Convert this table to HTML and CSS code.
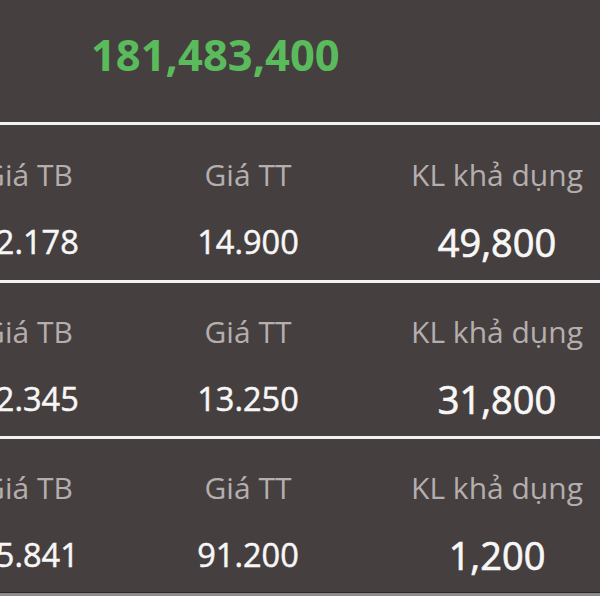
FILE: index.html
```html
<!DOCTYPE html>
<html lang="vi">
<head>
<meta charset="utf-8">
<link rel="stylesheet" href="styles.css">
</head>
<body>
<div class="screen">
  <div class="summary">
    <span class="total">181,483,400</span>
  </div>
  <div class="row first">
    <div class="cell"><div class="label">Giá TB</div><div class="value">12.178</div></div>
    <div class="cell"><div class="label">Giá TT</div><div class="value">14.900</div></div>
    <div class="cell"><div class="label">KL khả dụng</div><div class="value big">49,800</div></div>
  </div>
  <div class="row">
    <div class="cell"><div class="label">Giá TB</div><div class="value">12.345</div></div>
    <div class="cell"><div class="label">Giá TT</div><div class="value">13.250</div></div>
    <div class="cell"><div class="label">KL khả dụng</div><div class="value big">31,800</div></div>
  </div>
  <div class="row">
    <div class="cell"><div class="label">Giá TB</div><div class="value">85.841</div></div>
    <div class="cell"><div class="label">Giá TT</div><div class="value">91.200</div></div>
    <div class="cell"><div class="label">KL khả dụng</div><div class="value big">1,200</div></div>
  </div>
</div>
</body>
</html>
```
FILE: styles.css
```css
html, body {
  margin: 0;
  padding: 0;
  background: #ffffff;
  overflow: hidden;
  width: 600px;
  height: 600px;
}
body {
  font-family: "Open Sans", "Noto Sans", sans-serif;
}
.screen {
  width: 600px;
  height: 592px;
  background: #463f3f;
  border-bottom: 1px solid #2c2727;
  box-shadow: 0 3px 0 #8e8a8a;
  overflow: hidden;
}
.summary {
  height: 122px;
  box-sizing: border-box;
  padding-left: 91px;
  padding-top: 25px;
}
.total {
  font-size: 43.5px;
  font-weight: 700;
  color: #5abb5c;
  line-height: 60px;
}
.row {
  display: grid;
  grid-template-columns: 220px 220px 278px;
  margin-left: -82px;
  border-top: 3px solid #f2f2f2;
  height: 156px;
  box-sizing: border-box;
  padding-top: 29px;
}
.row.first {
  height: 158px;
  padding-top: 30px;
}
.cell {
  display: flex;
  flex-direction: column;
  align-items: center;
  text-align: center;
}
.label {
  font-size: 30px;
  line-height: 40px;
  color: #b4aeae;
  white-space: nowrap;
}
.value {
  margin-top: 25px;
  font-size: 32.5px;
  line-height: 44px;
  color: #f7f7f7;
  white-space: nowrap;
  -webkit-text-stroke: 0.5px #f7f7f7;
}
.value.big {
  font-size: 38px;
  -webkit-text-stroke: 0.7px #f7f7f7;
}
```
